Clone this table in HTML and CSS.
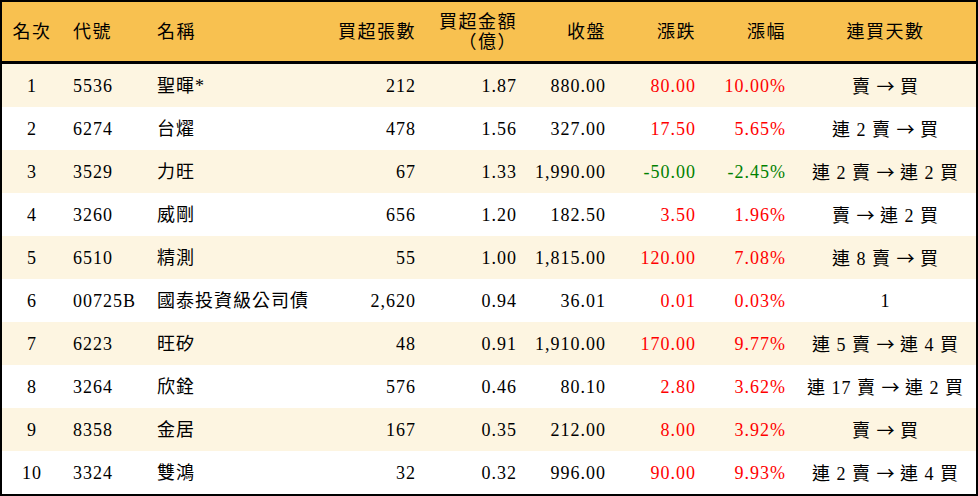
FILE: index.html
```html
<!DOCTYPE html>
<html lang="zh-Hant">
<head>
<meta charset="utf-8">
<title>買超排行</title>
<link rel="stylesheet" href="styles.css">
</head>
<body>
<div class="frame">
<table class="rank">
  <colgroup>
    <col class="c1"><col class="c2"><col class="c3"><col class="c4"><col class="c5"><col class="c6"><col class="c7"><col class="c8"><col class="c9">
  </colgroup>
  <thead>
    <tr>
      <th class="ctr">名次</th>
      <th class="lft">代號</th>
      <th class="lft">名稱</th>
      <th class="rgt">買超張數</th>
      <th class="rgt">買超金額<br>（億）</th>
      <th class="rgt">收盤</th>
      <th class="rgt">漲跌</th>
      <th class="rgt">漲幅</th>
      <th class="ctr">連買天數</th>
    </tr>
  </thead>
  <tbody>
    <tr class="alt"><td class="ctr">1</td><td class="lft">5536</td><td class="lft">聖暉*</td><td class="rgt">212</td><td class="rgt">1.87</td><td class="rgt">880.00</td><td class="rgt up">80.00</td><td class="rgt up">10.00%</td><td class="ctr">賣 <span class="arr">→</span> 買</td></tr>
    <tr><td class="ctr">2</td><td class="lft">6274</td><td class="lft">台燿</td><td class="rgt">478</td><td class="rgt">1.56</td><td class="rgt">327.00</td><td class="rgt up">17.50</td><td class="rgt up">5.65%</td><td class="ctr">連 2 賣 <span class="arr">→</span> 買</td></tr>
    <tr class="alt"><td class="ctr">3</td><td class="lft">3529</td><td class="lft">力旺</td><td class="rgt">67</td><td class="rgt">1.33</td><td class="rgt">1,990.00</td><td class="rgt down">-50.00</td><td class="rgt down">-2.45%</td><td class="ctr">連 2 賣 <span class="arr">→</span> 連 2 買</td></tr>
    <tr><td class="ctr">4</td><td class="lft">3260</td><td class="lft">威剛</td><td class="rgt">656</td><td class="rgt">1.20</td><td class="rgt">182.50</td><td class="rgt up">3.50</td><td class="rgt up">1.96%</td><td class="ctr">賣 <span class="arr">→</span> 連 2 買</td></tr>
    <tr class="alt"><td class="ctr">5</td><td class="lft">6510</td><td class="lft">精測</td><td class="rgt">55</td><td class="rgt">1.00</td><td class="rgt">1,815.00</td><td class="rgt up">120.00</td><td class="rgt up">7.08%</td><td class="ctr">連 8 賣 <span class="arr">→</span> 買</td></tr>
    <tr><td class="ctr">6</td><td class="lft">00725B</td><td class="lft">國泰投資級公司債</td><td class="rgt">2,620</td><td class="rgt">0.94</td><td class="rgt">36.01</td><td class="rgt up">0.01</td><td class="rgt up">0.03%</td><td class="ctr">1</td></tr>
    <tr class="alt"><td class="ctr">7</td><td class="lft">6223</td><td class="lft">旺矽</td><td class="rgt">48</td><td class="rgt">0.91</td><td class="rgt">1,910.00</td><td class="rgt up">170.00</td><td class="rgt up">9.77%</td><td class="ctr">連 5 賣 <span class="arr">→</span> 連 4 買</td></tr>
    <tr><td class="ctr">8</td><td class="lft">3264</td><td class="lft">欣銓</td><td class="rgt">576</td><td class="rgt">0.46</td><td class="rgt">80.10</td><td class="rgt up">2.80</td><td class="rgt up">3.62%</td><td class="ctr">連 17 賣 <span class="arr">→</span> 連 2 買</td></tr>
    <tr class="alt"><td class="ctr">9</td><td class="lft">8358</td><td class="lft">金居</td><td class="rgt">167</td><td class="rgt">0.35</td><td class="rgt">212.00</td><td class="rgt up">8.00</td><td class="rgt up">3.92%</td><td class="ctr">賣 <span class="arr">→</span> 買</td></tr>
    <tr><td class="ctr">10</td><td class="lft">3324</td><td class="lft">雙鴻</td><td class="rgt">32</td><td class="rgt">0.32</td><td class="rgt">996.00</td><td class="rgt up">90.00</td><td class="rgt up">9.93%</td><td class="ctr">連 2 賣 <span class="arr">→</span> 連 4 買</td></tr>
  </tbody>
</table>
</div>
</body>
</html>
```
FILE: styles.css
```css
html, body {
  margin: 0;
  padding: 0;
  background: #ffffff;
}

.frame {
  width: 974px;
  border: 2px solid #000000;
}

.rank {
  width: 974px;
  table-layout: fixed;
  border-collapse: separate;
  border-spacing: 0;
  font-family: "Liberation Serif", "Noto Sans CJK TC", serif;
  font-size: 18px;
  letter-spacing: 1px;
  color: #000000;
}

.c1 { width: 60px; }
.c2 { width: 84px; }
.c3 { width: 184px; }
.c4 { width: 95px; }
.c5 { width: 101px; }
.c6 { width: 89px; }
.c7 { width: 90px; }
.c8 { width: 90px; }
.c9 { width: 181px; }

.rank th {
  height: 59px;
  padding: 0;
  background: #f8c150;
  border-bottom: 3px solid #000000;
  font-weight: normal;
  line-height: 20px;
  letter-spacing: 1.5px;
  white-space: nowrap;
}

.rank td {
  height: 43px;
  padding: 0;
  line-height: 20px;
  white-space: nowrap;
}

.rank tr.alt td {
  background: #fdf5e1;
}

.arr {
  font-family: "Noto Sans CJK TC", sans-serif;
  font-size: 18px;
  letter-spacing: 0;
}

.ctr { text-align: center; }
.lft { text-align: left; padding-left: 11px !important; }
.rgt { text-align: right; padding-right: 9px !important; }

.up { color: #ff0000; }
.down { color: #008000; }
```
